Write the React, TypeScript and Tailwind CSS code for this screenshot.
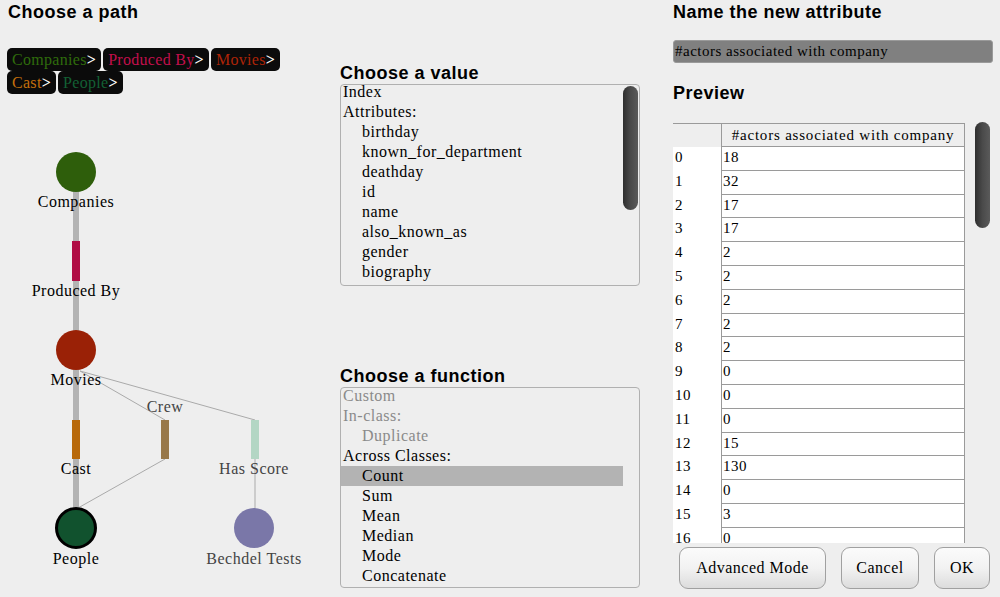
import React from "react";

const serif = "font-['Liberation_Serif',serif]";
const heading = "font-['Liberation_Sans',Arial,sans-serif] font-bold text-[18px] text-black";

const crumbs = [
  { label: "Companies", color: "text-[#2f6b0c]" },
  { label: "Produced By", color: "text-[#c20f4c]" },
  { label: "Movies", color: "text-[#ad2407]" },
  { label: "Cast", color: "text-[#c4700c]" },
  { label: "People", color: "text-[#136034]" },
];

const values: { label: string; indent?: boolean }[] = [
  { label: "Index" },
  { label: "Attributes:" },
  { label: "birthday", indent: true },
  { label: "known_for_department", indent: true },
  { label: "deathday", indent: true },
  { label: "id", indent: true },
  { label: "name", indent: true },
  { label: "also_known_as", indent: true },
  { label: "gender", indent: true },
  { label: "biography", indent: true },
];

const functions: { label: string; indent?: boolean; muted?: boolean; active?: boolean }[] = [
  { label: "Custom", muted: true },
  { label: "In-class:", muted: true },
  { label: "Duplicate", indent: true, muted: true },
  { label: "Across Classes:" },
  { label: "Count", indent: true, active: true },
  { label: "Sum", indent: true },
  { label: "Mean", indent: true },
  { label: "Median", indent: true },
  { label: "Mode", indent: true },
  { label: "Concatenate", indent: true },
];

const rows = [18, 32, 17, 17, 2, 2, 2, 2, 2, 0, 0, 0, 15, 130, 0, 3, 0];

/* ── graph of the schema, drawn in page coordinates ── */
const PathGraph = () => (
  <svg width={330} height={497} viewBox="0 100 330 497" className="block">
    <g stroke="#aaaaaa" strokeWidth={1}>
      <line x1={80} y1={372} x2={165} y2={421} />
      <line x1={80} y1={372} x2={255} y2={421} />
      <line x1={165} y1={460} x2={78} y2={509} />
      <line x1={255} y1={460} x2={255} y2={510} />
    </g>
    <line x1={76} y1={173} x2={76} y2={529} stroke="#b3b3b3" strokeWidth={6} />
    <circle cx={76} cy={173} r={20} fill="#2e5e0b" />
    <rect x={72} y={242} width={8} height={40} fill="#b00d45" />
    <circle cx={76} cy={351} r={20} fill="#9a2106" />
    <rect x={72} y={421} width={8} height={39} fill="#b8690b" />
    <rect x={161} y={421} width={8} height={39} fill="#98784a" />
    <rect x={251} y={421} width={8} height={39} fill="#b3d6c4" />
    <circle cx={76} cy={529} r={19.5} fill="#11522e" stroke="#000" strokeWidth={3} />
    <circle cx={254} cy={529} r={20} fill="#7a77a8" />
    <g fontFamily="'Liberation Serif', serif" fontSize={16} textAnchor="middle" letterSpacing={0.5}>
      <text x={76} y={208} fill="#000">Companies</text>
      <text x={76} y={297} fill="#000">Produced By</text>
      <text x={76} y={386} fill="#000">Movies</text>
      <text x={165} y={413} fill="#444">Crew</text>
      <text x={76} y={475} fill="#000">Cast</text>
      <text x={254} y={475} fill="#444">Has Score</text>
      <text x={76} y={565} fill="#000">People</text>
      <text x={254} y={565} fill="#444">Bechdel Tests</text>
    </g>
  </svg>
);

const Thumb = ({ h }: { h: string }) => (
  <div className={`w-[15px] ${h} rounded-full bg-[linear-gradient(to_right,#2e2e2e,#4a4a4a_50%,#5a5a5a)]`} />
);

const Btn = ({ label, w }: { label: string; w: string }) => (
  <button
    className={`${w} h-[42px] rounded-[9px] border border-[#a0a0a0] bg-[linear-gradient(to_bottom,#fbfbfb,#f2f2f2_50%,#dcdcdc)] text-[16px] tracking-[0.5px] text-black`}
  >
    {label}
  </button>
);

export default function App() {
  return (
    <div className={`w-[1000px] h-[597px] overflow-hidden bg-[#eeeeee] flex ${serif} text-[16px] tracking-[0.5px] text-black`}>
      {/* left: path */}
      <div className="w-[340px] flex-shrink-0 flex flex-col">
        <h1 className={`${heading} leading-[24px] pl-[8px]`}>Choose a path</h1>
        <div className="mt-[24px] pl-[7px] w-[300px] flex flex-wrap gap-x-[2px]">
          {crumbs.map((c) => (
            <span
              key={c.label}
              className="h-[23px] leading-[23px] bg-[#0b0b0b] rounded-[5px] px-[5px] whitespace-nowrap tracking-[0.3px]"
            >
              <span className={c.color}>{c.label}</span>
              <span className="text-white font-bold">&gt;</span>
            </span>
          ))}
        </div>
        <div className="mt-[5px]">
          <PathGraph />
        </div>
      </div>

      {/* middle: value + function */}
      <div className="w-[300px] flex-shrink-0 flex flex-col pt-[62px]">
        <h2 className={`${heading} leading-[22px]`}>Choose a value</h2>
        <div className="h-[202px] border border-[#b0b0b0] rounded-[4px] flex overflow-hidden">
          <ul className="flex-1 -mt-[3px]">
            {values.map((v) => (
              <li key={v.label} className={`leading-[20px] h-[20px] ${v.indent ? "pl-[21px]" : "pl-[2px]"}`}>
                {v.label}
              </li>
            ))}
          </ul>
          <div className="pt-[1px] pr-[1px]">
            <Thumb h="h-[124px]" />
          </div>
        </div>

        <h2 className={`${heading} leading-[22px] mt-[79px]`}>Choose a function</h2>
        <div className="h-[201px] border border-[#b0b0b0] rounded-[4px] flex overflow-hidden">
          <ul className="flex-1 -mt-[2px]">
            {functions.map((f) => (
              <li
                key={f.label}
                className={`leading-[20px] h-[20px] ${f.indent ? "pl-[21px]" : "pl-[2px]"} ${
                  f.muted ? "text-[#8a8a8a]" : "text-black"
                } ${f.active ? "bg-[#b3b3b3]" : ""}`}
              >
                {f.label}
              </li>
            ))}
          </ul>
          <div className="w-[16px]" />
        </div>
      </div>

      {/* right: name + preview */}
      <div className="ml-[33px] flex-1 flex flex-col">
        <h2 className={`${heading} leading-[24px]`}>Name the new attribute</h2>
        <div className="mt-[16px] w-[320px] h-[23px] rounded-[3px] border border-[#9a9a9a] bg-[#808080] pl-[1px] leading-[21px] text-[15px]">
          #actors associated with company
        </div>
        <h2 className={`${heading} leading-[24px] mt-[18px]`}>Preview</h2>

        <div className="mt-[18px] flex">
          <div className="w-[292px] h-[420px] overflow-hidden">
            <div className="flex h-[24px] border-t border-[#9a9a9a]">
              <div className="w-[48px]" />
              <div className="flex-1 border-x border-b border-[#9a9a9a] text-center leading-[22px] text-[15px] tracking-[0.8px]">
                #actors associated with company
              </div>
            </div>
            {rows.map((v, i) => (
              <div key={i} className="flex h-[23.8px] bg-white">
                <div className="w-[48px] pl-[2px] leading-[20px] text-[15px]">{i}</div>
                <div className="flex-1 border-x border-b border-[#9a9a9a] pl-[1px] leading-[20px] text-[15px]">
                  {v}
                </div>
              </div>
            ))}
          </div>
          <div className="ml-[10px] -mt-[1px]">
            <Thumb h="h-[106px]" />
          </div>
        </div>

        <div className="mt-[4px] flex gap-[15px] pl-[6px]">
          <Btn label="Advanced Mode" w="w-[147px]" />
          <Btn label="Cancel" w="w-[78px]" />
          <Btn label="OK" w="w-[56px]" />
        </div>
      </div>
    </div>
  );
}
